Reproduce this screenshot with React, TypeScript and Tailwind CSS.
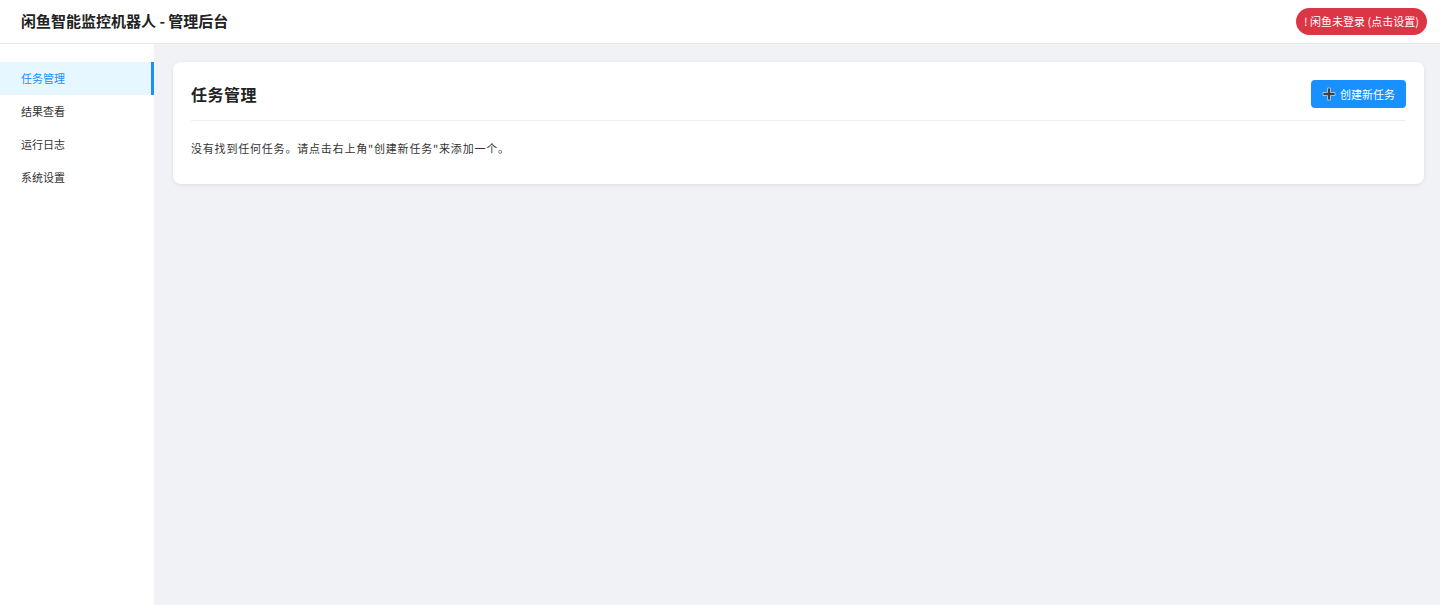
export default function App() {
  const items = ["任务管理", "结果查看", "运行日志", "系统设置"];
  return (
    <div
      className="flex h-[605px] w-full flex-col bg-[#f0f2f5] text-[#333]"
      style={{ fontFamily: '"Noto Sans CJK SC", "Noto Sans", sans-serif' }}
    >
      <header className="flex h-[44px] shrink-0 items-center justify-between border-b border-[#e4e6ea] bg-white pl-[21px] pr-[13px]">
        <h1 className="text-[15px] font-bold text-[#222]">闲鱼智能监控机器人 - 管理后台</h1>
        <button className="flex h-[27px] items-center rounded-full bg-[#dc3545] px-[8px] text-[11px] text-white">
          ! 闲鱼未登录 (点击设置)
        </button>
      </header>
      <div className="flex min-h-0 flex-1">
        <aside className="w-[154px] shrink-0 bg-white pt-[18px]">
          {items.map((it, i) => (
            <div
              key={it}
              className={
                i === 0
                  ? "flex h-[33px] items-center border-r-[3px] border-[#1890ff] bg-[#e6f7ff] pl-[21px] text-[11px] text-[#1890ff]"
                  : "flex h-[33px] items-center pl-[21px] text-[11px] text-[#333]"
              }
            >
              {it}
            </div>
          ))}
        </aside>
        <main className="flex-1 pl-[19px] pr-[16px] pt-[18px]">
          <div className="rounded-[8px] bg-white px-[18px] pb-[28px] pt-[18px] shadow-[0_1px_4px_rgba(0,0,0,0.08)]">
            <div className="box-content flex h-[28px] items-center justify-between border-b border-[#eeeeee] pb-[12px]">
              <h2 className="text-[16px] font-bold tracking-[0.5px] text-[#222]">任务管理</h2>
              <button className="flex h-[28px] w-[95px] items-center justify-center gap-[4px] rounded-[4px] bg-[#1890ff] text-[11px] text-white">
                <svg width="14" height="14" viewBox="0 0 14 14">
                  <path d="M5.5 1h3v4.5H13v3H8.5V13h-3V8.5H1v-3h4.5z" fill="#3d4147" stroke="#c9d1d8" strokeWidth="0.8" />
                </svg>
                创建新任务
              </button>
            </div>
            <p className="pt-[19px] text-[11px] leading-[16px] tracking-[0.8px] text-[#333]">
              没有找到任何任务。请点击右上角"创建新任务"来添加一个。
            </p>
          </div>
        </main>
      </div>
    </div>
  );
}
